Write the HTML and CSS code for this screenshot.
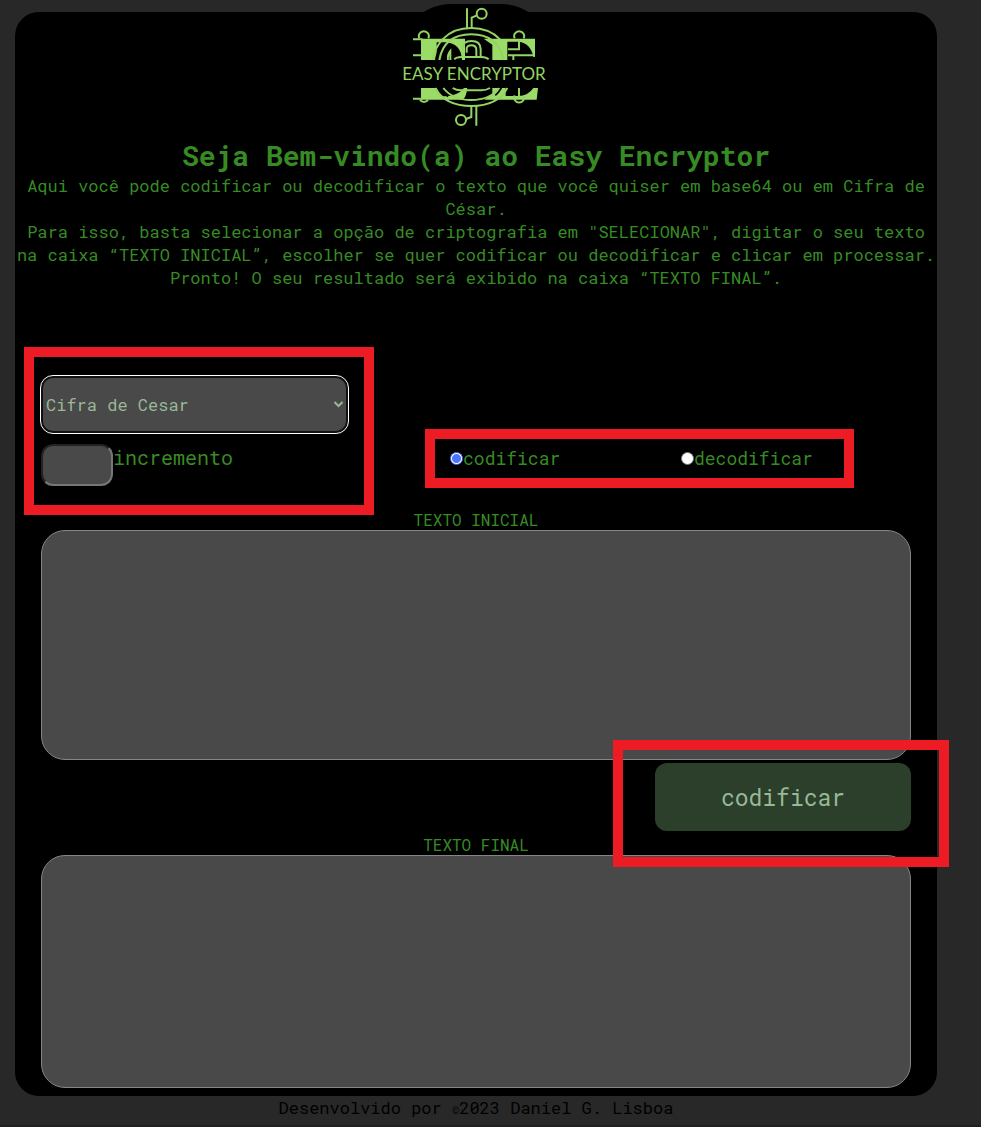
FILE: index.html
```html
<!DOCTYPE html>
<html lang="pt-BR">
<head>
<meta charset="utf-8">
<meta name="viewport" content="width=device-width, initial-scale=1">
<title>Easy Encryptor</title>
<link rel="stylesheet" href="styles.css">
</head>
<body>
<main class="panel">
  <header class="intro">
    <svg class="logo" viewBox="0 0 150 130" role="img" aria-label="Easy Encryptor">
      <rect width="150" height="130" rx="50" fill="#000"/>
      <g transform="translate(-11 -4) scale(.33333)" fill="none" stroke="#93d463" stroke-width="6">
        <path d="M231 25V84M245 84V53L261 46M259 318V377M244 318V351L228 357"/>
        <circle cx="275" cy="41" r="15"/>
        <circle cx="213" cy="360" r="15"/>
        <g fill="#9bdb68" stroke="none">
          <path d="M93 116H225V180H216Q214 131 166 127H140V180H93Z"/>
          <path d="M281 116H435V171H430Q422 129 386 125H352V180H307V134Z"/>
          <path d="M93 264H140L152 288Q200 292 222 264H232Q228 294 218 299H93Z"/>
          <path d="M307 264H347V288H385Q415 287 430 264H444L440 299H283L307 282Z"/>
        </g>
        <path d="M69 118H98M69 166H98M69 296H98"/>
        <path d="M138 180Q144 150 160 130M155 180Q158 155 174 138" stroke="#000" stroke-width="7"/>
        <path d="M160 116Q191 84 244 84Q297 84 330 118M128 180Q134 143 160 116M148 180Q162 103 244 103Q324 103 341 180"/>
        <path d="M136 264Q165 318 244 318Q323 318 352 264M160 264Q188 300 244 300Q300 300 327 264"/>
        <path d="M150 264Q158 279 174 290M334 264Q326 278 316 286" stroke="#000" stroke-width="5"/>
        <path d="M174 180Q172 164 181 153V180M193 178Q199 171 214 171H274Q289 171 296 178M188 264Q198 271 214 271H274Q288 271 300 264"/>
        <path d="M218 170V145Q218 123 244 123Q272 123 272 148V170M230 158V145Q232 136 244 136Q259 136 259 150V170"/>
        <path d="M88 115A15 15 0 1 1 115 115M374 115A15 15 0 1 1 401 115M90 299A14 14 0 0 0 114 299M374 286A15 15 0 1 0 401 286"/>
        <path d="M354 148H387V120M354 166H430M370 166V180M387 264V294"/>
      </g>
      <text class="logo-text" x="73" y="76" text-anchor="middle">EASY ENCRYPTOR</text>
    </svg>
    <h1 class="title">Seja Bem-vindo(a) ao Easy Encryptor</h1>
    <p class="lead">Aqui você pode codificar ou decodificar o texto que você quiser em base64 ou em Cifra de César.<br>Para isso, basta selecionar a opção de criptografia em "SELECIONAR", digitar o seu texto na caixa “TEXTO INICIAL”, escolher se quer codificar ou decodificar e clicar em processar.<br>Pronto! O seu resultado será exibido na caixa “TEXTO FINAL”.</p>
  </header>

  <form class="form">
    <div class="controls">
      <div class="cipher">
        <div class="select-wrap">
          <select class="select" aria-label="Criptografia">
            <option>Cifra de Cesar</option>
            <option>Base64</option>
          </select>
          <svg class="chevron" viewBox="0 0 10 7" aria-hidden="true"><path d="M1 1L5 5L9 1"/></svg>
        </div>
        <div class="increment">
          <input class="increment-input" id="incremento" type="text" inputmode="numeric">
          <label for="incremento">incremento</label>
        </div>
        <span class="mark mark-cipher"></span>
      </div>
      <div class="modes">
        <div class="mode"><input class="radio" type="radio" name="modo" id="codificar" checked><label for="codificar">codificar</label></div>
        <div class="mode"><input class="radio" type="radio" name="modo" id="decodificar"><label for="decodificar">decodificar</label></div>
        <span class="mark mark-modes"></span>
      </div>
    </div>

    <label class="area-label" for="inicial">TEXTO INICIAL</label>
    <textarea class="area area-input" id="inicial"></textarea>
    <div class="actions">
      <div class="action">
        <button class="button" type="button">codificar</button>
        <span class="mark mark-action"></span>
      </div>
    </div>
    <label class="area-label" for="final">TEXTO FINAL</label>
    <textarea class="area area-output" id="final"></textarea>
  </form>
</main>
<footer class="footer">Desenvolvido por <span class="copy">©</span>2023 Daniel G. Lisboa</footer>
</body>
</html>
```
FILE: styles.css
```css
* { box-sizing: border-box; }

html { background: #211f20; }

body {
  margin: 0;
  padding-top: 12px;
  background: #282828;
  color: #378b25;
  font-family: "Roboto Mono", "Liberation Mono", monospace;
  font-size: 17px;
  line-height: 23px;
}

.panel {
  display: flow-root;
  margin: 0 44px 0 15px;
  padding-bottom: 8px;
  border-radius: 24px;
  background: #000;
}

.intro { text-align: center; }

.logo {
  display: block;
  width: 150px;
  height: 130px;
  margin: -8px auto 0;
}

.logo-text {
  fill: #93d463;
  font-family: Lato, sans-serif;
  font-size: 17px;
}

.title {
  margin: 4px 0 0;
  font-size: 28px;
  line-height: 36px;
}

.lead { margin: 0; }

.form { padding: 87px 26px 0; }

.controls {
  display: flex;
  justify-content: space-between;
}

.cipher {
  position: relative;
  width: 35.3%;
}

.select-wrap { position: relative; }

.select {
  display: block;
  width: 100%;
  height: 57px;
  padding: 0 3px;
  border: 2px solid #111;
  border-radius: 12px;
  outline: 1px solid #fff;
  background: #494949;
  color: #98b897;
  font: inherit;
  appearance: none;
}

.chevron {
  position: absolute;
  right: 4px;
  top: 25px;
  width: 11px;
  height: 7px;
  fill: none;
  stroke: #98b897;
  stroke-width: 2;
  pointer-events: none;
}

.increment {
  display: flex;
  margin-top: 11px;
  font-size: 20px;
  line-height: 26px;
}

.increment-input {
  width: 72px;
  height: 42px;
  border: 2px solid;
  border-color: #222 #767676 #767676 #222;
  border-radius: 12px;
  background: #494949;
  color: #98b897;
  font: inherit;
}

.modes {
  position: relative;
  display: flex;
  align-items: center;
  width: 53.1%;
  height: 24px;
  margin-top: 70px;
  font-size: 18px;
}

.mode {
  display: flex;
  flex: 1;
  align-items: center;
}

.radio {
  flex: none;
  appearance: none;
  width: 13px;
  height: 13px;
  margin: 0 0 0 1px;
  border: 1px solid #767676;
  border-radius: 50%;
  background: #fff;
}

.radio:checked {
  border-color: #4a75fb;
  background: radial-gradient(circle, #4a75fb 4px, #fff 5px);
}

.area-label {
  display: block;
  margin-top: 24px;
  font-size: 16px;
  line-height: 20px;
  text-align: center;
}

.area {
  display: block;
  width: 100%;
  padding: 16px;
  border: 1px solid #858585;
  border-radius: 24px;
  background: #494949;
  color: #98b897;
  font: inherit;
  resize: none;
}

.area-input { height: 230px; }

.area-output { height: 233px; }

.actions {
  display: flex;
  justify-content: flex-end;
  margin: 3px 0 -20px;
}

.action {
  position: relative;
  width: 256px;
}

.button {
  display: block;
  width: 100%;
  height: 68px;
  border: 0;
  border-radius: 12px;
  background: #2b3f2b;
  color: #98b897;
  font: inherit;
  font-size: 23px;
}

.mark {
  position: absolute;
  z-index: 1;
  border: 10px solid #ed1c24;
  pointer-events: none;
}

.mark-cipher { inset: -29px -26px -29px -17px; }

.mark-modes { inset: -17px 57px -18px -24px; }

.mark-action { inset: -23px -38px -36px -42px; }

.footer {
  padding-right: 29px;
  padding-bottom: 4px;
  color: #000;
  text-align: center;
}

.copy { font-size: 12px; }
```
